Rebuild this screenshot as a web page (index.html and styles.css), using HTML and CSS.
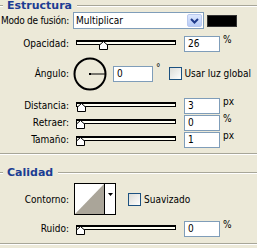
FILE: index.html
```html
<!DOCTYPE html>
<html lang="es">
  <head>
    <meta charset="UTF-8" />
    <title>Estilo de capa</title>
    <link rel="stylesheet" href="styles.css">
  </head>
  <body>
    <div class="panel">
      <div class="legend"><span class="legend-text">Estructura</span></div>

      <div class="row row-mode">
        <label class="lbl lbl-tight">Modo de fusión:</label>
        <div class="select">
          <span class="select-text">Multiplicar</span>
          <span class="select-btn">
            <svg width="9" height="6" viewBox="0 0 9 6"><path d="M1 1 L4.5 4.5 L8 1" fill="none" stroke="#1f3a8a" stroke-width="2"/></svg>
          </span>
        </div>
        <span class="swatch"></span>
      </div>

      <div class="row row-slider">
        <label class="lbl">Opacidad:</label>
        <div class="slider"><div class="track"></div><svg class="thumb" style="left: 23px" width="9" height="9" viewBox="0 0 9 9"><polygon points="0.5,8.5 0.5,4 4.5,0.5 8.5,4 8.5,8.5" fill="#fff" stroke="#000"/></svg></div>
        <input class="num" type="text" value="26" />
        <span class="unit">%</span>
      </div>

      <div class="row row-angle">
        <label class="lbl">Ángulo:</label>
        <div class="dial">
          <svg width="34" height="34" viewBox="0 0 34 34"><circle cx="17" cy="17" r="15.5" fill="none" stroke="#000" stroke-width="2"/><line x1="17" y1="17" x2="32" y2="17" stroke="#000" stroke-width="1"/><rect x="16" y="16" width="2" height="2" fill="#000"/></svg>
        </div>
        <input class="num num-angle" type="text" value="0" />
        <span class="deg">°</span>
        <span class="check"></span>
        <span class="check-label">Usar luz global</span>
      </div>

      <div class="row row-slider">
        <label class="lbl">Distancia:</label>
        <div class="slider"><div class="track"></div><svg class="thumb" style="left: 1px" width="9" height="9" viewBox="0 0 9 9"><polygon points="0.5,8.5 0.5,4 4.5,0.5 8.5,4 8.5,8.5" fill="#fff" stroke="#000"/></svg></div>
        <input class="num" type="text" value="3" />
        <span class="unit">px</span>
      </div>

      <div class="row row-slider">
        <label class="lbl">Retraer:</label>
        <div class="slider"><div class="track"></div><svg class="thumb" style="left: 0px" width="9" height="9" viewBox="0 0 9 9"><polygon points="0.5,8.5 0.5,4 4.5,0.5 8.5,4 8.5,8.5" fill="#fff" stroke="#000"/></svg></div>
        <input class="num" type="text" value="0" />
        <span class="unit">%</span>
      </div>

      <div class="row row-slider">
        <label class="lbl">Tamaño:</label>
        <div class="slider"><div class="track"></div><svg class="thumb" style="left: 0px" width="9" height="9" viewBox="0 0 9 9"><polygon points="0.5,8.5 0.5,4 4.5,0.5 8.5,4 8.5,8.5" fill="#fff" stroke="#000"/></svg></div>
        <input class="num" type="text" value="1" />
        <span class="unit">px</span>
      </div>

      <div class="sep"></div>

      <div class="legend legend-2"><span class="legend-text">Calidad</span></div>

      <div class="row row-contour">
        <label class="lbl">Contorno:</label>
        <div class="contour">
          <svg width="29" height="30" viewBox="0 0 29 30"><polygon points="0,30 29,0 29,30" fill="#aaa599"/></svg>
          <span class="contour-btn">
            <svg width="5" height="3" viewBox="0 0 5 3"><polygon points="0,0 5,0 2.5,3" fill="#000"/></svg>
          </span>
        </div>
        <span class="check"></span>
        <span class="check-label">Suavizado</span>
      </div>

      <div class="row row-slider">
        <label class="lbl">Ruido:</label>
        <div class="slider"><div class="track"></div><svg class="thumb" style="left: 0px" width="9" height="9" viewBox="0 0 9 9"><polygon points="0.5,8.5 0.5,4 4.5,0.5 8.5,4 8.5,8.5" fill="#fff" stroke="#000"/></svg></div>
        <input class="num" type="text" value="0" />
        <span class="unit">%</span>
      </div>

      <div class="sep sep-bottom"></div>
    </div>
  </body>
</html>
```

FILE: styles.css
```css
body {
  margin: 0;
  background-color: #ece9d8;
  font-family: "DejaVu Sans Condensed", "Liberation Sans", sans-serif;
  font-size: 10px;
  color: #000;
}

.panel {
  width: 257px;
  height: 248px;
  overflow: hidden;
}

/* group headings */

.legend {
  display: flex;
  align-items: center;
  height: 11px;
}

.legend::before {
  content: "";
  width: 3px;
  border-top: 1px solid #a7a698;
  border-bottom: 1px solid #fff;
}

.legend::after {
  content: "";
  flex: 1;
  border-top: 1px solid #a7a698;
  border-bottom: 1px solid #fff;
  margin-left: 5px;
}

.legend-text {
  color: #1c3d93;
  font-family: "DejaVu Sans", sans-serif;
  font-weight: bold;
  font-size: 11px;
  margin-left: 4px;
}

.legend-2 {
  margin-top: 12px;
}

.sep {
  margin-top: 5px;
  border-top: 1px solid #a7a698;
  border-bottom: 1px solid #fff;
}

.sep-bottom {
  margin-top: 6px;
}

/* rows */

.row {
  display: flex;
  align-items: center;
}

.lbl {
  width: 69px;
  flex: none;
  display: flex;
  justify-content: flex-end;
  white-space: nowrap;
}

.lbl-tight {
  letter-spacing: -0.25px;
}

.row-mode {
  height: 17px;
  margin-top: 1px;
}

.row-slider {
  height: 17px;
  margin-top: 6px;
}

.row-slider + .row-slider {
  margin-top: 0;
}

.row-angle {
  height: 35px;
  margin-top: 4px;
  margin-bottom: 6px;
}

.row-contour {
  height: 32px;
  margin-top: 5px;
}

.row-contour + .row-slider {
  margin-top: 5px;
}

/* blend mode select */

.select {
  margin-left: 4px;
  width: 131px;
  height: 17px;
  box-sizing: border-box;
  border: 1px solid #7f9db9;
  background: #fff;
  display: flex;
  align-items: center;
}

.select-text {
  flex: 1;
  padding-left: 2px;
}

.select-btn {
  width: 15px;
  height: 13px;
  margin-right: 1px;
  border: 1px solid #b9c9ef;
  border-radius: 2px;
  background: linear-gradient(#dde7fe, #b7cbf6);
  display: flex;
  align-items: center;
  justify-content: center;
  box-sizing: border-box;
}

.swatch {
  margin-left: 3px;
  width: 30px;
  height: 12px;
  background: #000;
  border: 1px solid #333;
  box-sizing: border-box;
}

/* sliders */

.slider {
  position: relative;
  width: 100px;
  height: 17px;
  margin-left: 7px;
  margin-right: 8px;
}

.track {
  margin-top: 5px;
  height: 5px;
  box-sizing: border-box;
  border: 1px solid #000;
  border-top-width: 2px;
  background: #fffff4;
}

.thumb {
  position: absolute;
  top: 6px;
}

.num {
  width: 36px;
  height: 16px;
  box-sizing: border-box;
  border: 1px solid #7f9db9;
  background: #fff;
  font: inherit;
  padding: 0 0 0 3px;
  margin: 0;
}

.unit {
  margin-left: 3px;
  align-self: flex-start;
  margin-top: -1px;
}

/* angle */

.dial {
  margin-left: 4px;
  width: 34px;
  height: 34px;
}

.num-angle {
  margin-left: 6px;
  width: 40px;
}

.deg {
  margin-left: 3px;
  align-self: flex-start;
  margin-top: 6px;
}

.check {
  flex: none;
  margin-left: 8px;
  width: 13px;
  height: 13px;
  box-sizing: border-box;
  border: 1px solid #1c5180;
  background: linear-gradient(135deg, #dcdcd7, #fff);
}

.check-label {
  margin-left: 3px;
  white-space: nowrap;
}

/* contour */

.contour {
  margin-left: 5px;
  width: 42px;
  height: 32px;
  box-sizing: border-box;
  border: 1px solid #000;
  background: #fff;
  display: flex;
}

.contour-btn {
  width: 11px;
  border-left: 1px solid #000;
  display: flex;
  justify-content: center;
  padding-top: 9px;
  box-sizing: border-box;
}

.row-contour .check {
  margin-left: 12px;
}
```
